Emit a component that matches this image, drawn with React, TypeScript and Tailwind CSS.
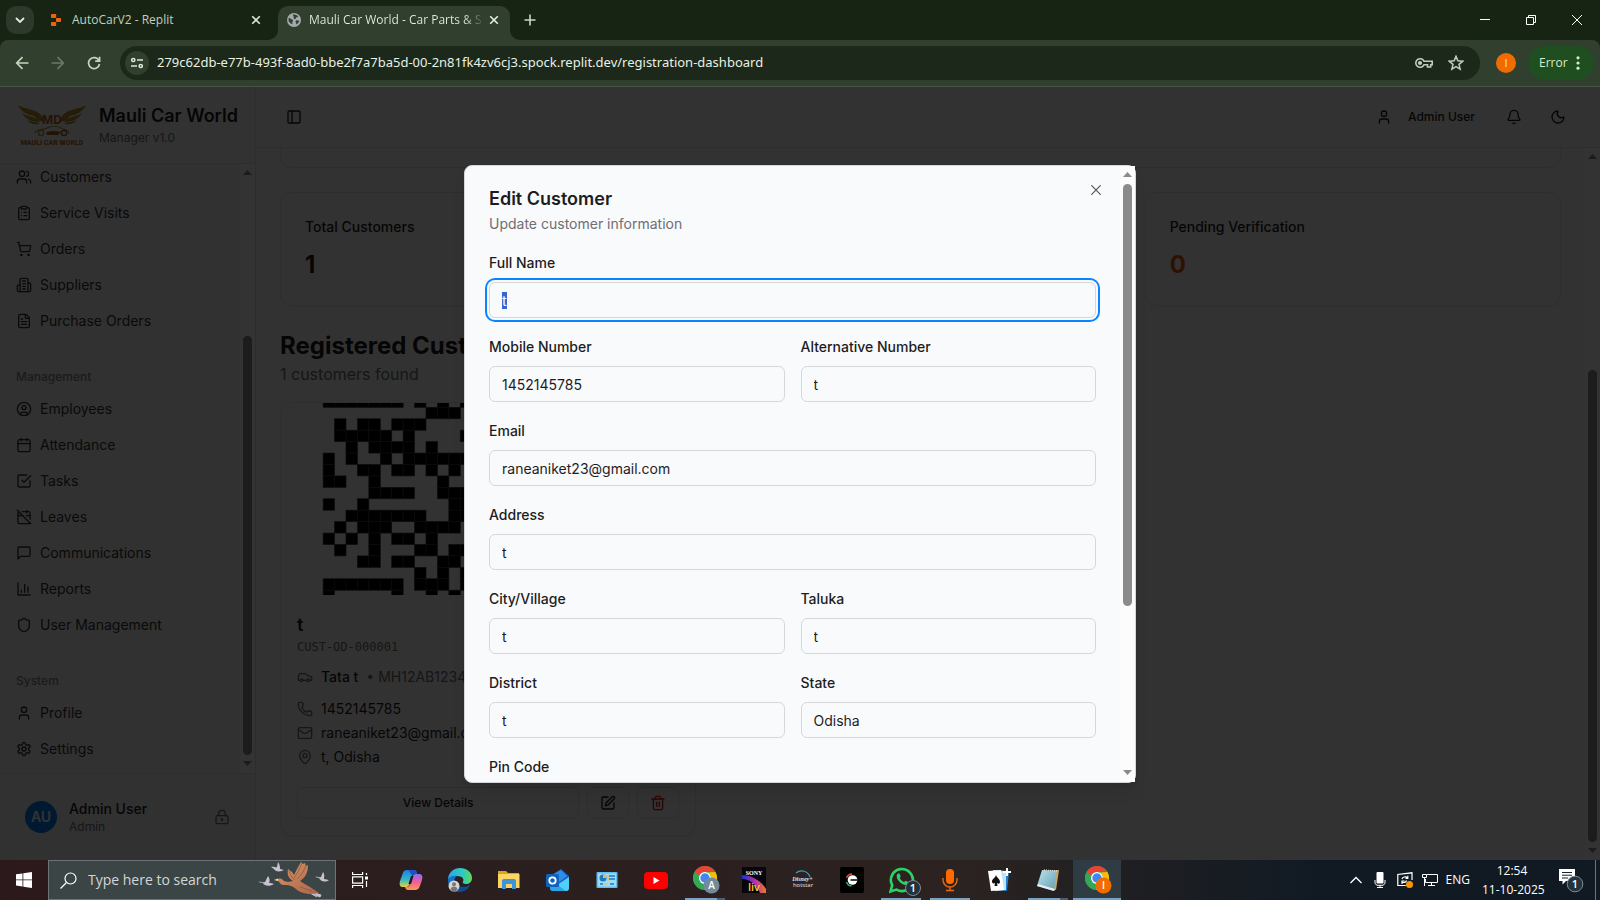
import { useEffect, useRef, type ReactNode } from 'react';
import {
  Bell,
  Calendar,
  CalendarOff,
  Car,
  CircleUser,
  ClipboardList,
  FileText,
  LockKeyhole,
  Mail,
  MapPin,
  Moon,
  PanelLeft,
  Phone,
  Shield,
  ShoppingCart,
  Trash2,
  User,
  Users,
} from 'lucide-react';

/* ---------- icons ---------- */

function Stroke({ children }: { children: ReactNode }) {
  return (
    <svg
      viewBox="0 0 24 24"
      fill="none"
      stroke="currentColor"
      strokeWidth="2"
      strokeLinecap="round"
      strokeLinejoin="round"
      className="size-4 shrink-0"
    >
      {children}
    </svg>
  );
}

const BuildingIcon = () => (
  <Stroke>
    <path d="M6 22V4a2 2 0 0 1 2-2h8a2 2 0 0 1 2 2v18Z" />
    <path d="M6 12H4a2 2 0 0 0-2 2v6a2 2 0 0 0 2 2h2" />
    <path d="M18 9h2a2 2 0 0 1 2 2v9a2 2 0 0 1-2 2h-2" />
    <path d="M10 6h4M10 10h4M10 14h4M10 18h4" />
  </Stroke>
);

const TaskIcon = () => (
  <Stroke>
    <path d="m9 11 3 3L22 4" />
    <path d="M21 12v7a2 2 0 0 1-2 2H5a2 2 0 0 1-2-2V5a2 2 0 0 1 2-2h11" />
  </Stroke>
);

const MessageIcon = () => (
  <Stroke>
    <path d="M21 15a2 2 0 0 1-2 2H7l-4 4V5a2 2 0 0 1 2-2h14a2 2 0 0 1 2 2z" />
  </Stroke>
);

const ReportIcon = () => (
  <Stroke>
    <path d="M3 3v18h18M18 17V9M13 17V5M8 17v-3" />
  </Stroke>
);

const GearIcon = () => (
  <Stroke>
    <path d="M12.22 2h-.44a2 2 0 0 0-2 2v.18a2 2 0 0 1-1 1.73l-.43.25a2 2 0 0 1-2 0l-.15-.08a2 2 0 0 0-2.73.73l-.22.38a2 2 0 0 0 .73 2.73l.15.1a2 2 0 0 1 1 1.72v.51a2 2 0 0 1-1 1.74l-.15.09a2 2 0 0 0-.73 2.73l.22.38a2 2 0 0 0 2.73.73l.15-.08a2 2 0 0 1 2 0l.43.25a2 2 0 0 1 1 1.73V20a2 2 0 0 0 2 2h.44a2 2 0 0 0 2-2v-.18a2 2 0 0 1 1-1.73l.43-.25a2 2 0 0 1 2 0l.15.08a2 2 0 0 0 2.73-.73l.22-.39a2 2 0 0 0-.73-2.73l-.15-.08a2 2 0 0 1-1-1.74v-.5a2 2 0 0 1 1-1.74l.15-.09a2 2 0 0 0 .73-2.73l-.22-.38a2 2 0 0 0-2.73-.73l-.15.08a2 2 0 0 1-2 0l-.43-.25a2 2 0 0 1-1-1.73V4a2 2 0 0 0-2-2z" />
    <circle cx="12" cy="12" r="3" />
  </Stroke>
);

const EditIcon = () => (
  <Stroke>
    <path d="M12 3H5a2 2 0 0 0-2 2v14a2 2 0 0 0 2 2h14a2 2 0 0 0 2-2v-7" />
    <path d="M18.375 2.625a2.121 2.121 0 1 1 3 3L12 15l-4 1 1-4Z" />
  </Stroke>
);

/* ---------- scroll bar ---------- */

function ScrollBar({ before, thumb, after }: { before: number; thumb: number; after: number }) {
  return (
    <div className="flex w-[15px] shrink-0 flex-col items-center bg-[#fcfcfc]" aria-hidden="true">
      <svg viewBox="0 0 9 15" className="h-[15px] w-[9px] shrink-0" fill="#8b8b8b">
        <path d="M4.500 6 9 11H0Z" />
      </svg>
      <div className="flex w-[9px] flex-1 flex-col">
        <div className="basis-0" style={{ flexGrow: before }} />
        <div className="basis-0 rounded-full bg-[#8b8b8b]" style={{ flexGrow: thumb }} />
        <div className="basis-0" style={{ flexGrow: after }} />
      </div>
      <svg viewBox="0 0 9 15" className="h-[15px] w-[9px] shrink-0" fill="#8b8b8b">
        <path d="M0 3h9L4.500 8Z" />
      </svg>
    </div>
  );
}

/* ---------- browser frame ---------- */

const CloseX = () => (
  <svg viewBox="0 0 10 10" className="size-[10px]" stroke="currentColor" strokeWidth="1.6" fill="none">
    <path d="M1.200 1.200 8.800 8.800M8.800 1.200 1.200 8.800" />
  </svg>
);

function TabStrip() {
  return (
    <div className="flex h-10 items-center bg-[#172413] pl-[6px] font-['Open_Sans','Noto_Sans',sans-serif] text-xs text-[#c3d0be]">
      <button aria-label="Search tabs" className="flex size-7 items-center justify-center rounded-[10px] bg-[#2d3a2b] text-[#e2ecde]">
        <svg viewBox="0 0 10 6" className="h-[6px] w-[10px]" fill="none" stroke="currentColor" strokeWidth="1.800">
          <path d="m1 1 4 4 4-4" />
        </svg>
      </button>
      <div className="flex w-[244px] items-center pr-[17px] pl-[17px]">
        <svg viewBox="0 0 10 12" className="mr-[11px] h-3 w-[10px]" fill="#f26207">
          <rect width="5.200" height="4" rx=".8" />
          <rect x="5" y="4" width="5" height="4" rx=".8" />
          <rect y="8" width="5.200" height="4" rx=".8" />
        </svg>
        <span className="flex-1 whitespace-nowrap">AutoCarV2 - Replit</span>
        <button aria-label="Close tab" className="text-[#dbe5d7]"><CloseX /></button>
      </div>
      <div className="relative flex h-[34px] w-[232px] items-center self-end rounded-t-[10px] bg-[#303f2e] pr-[11px] pb-[6px] pl-[9px] text-[#e6efe2]">
        <svg viewBox="0 0 10 10" className="absolute bottom-0 -left-[10px] size-[10px]" fill="#303f2e"><path d="M10 0v10H0A10 10 0 0 0 10 0Z" /></svg>
        <svg viewBox="0 0 10 10" className="absolute -right-[10px] bottom-0 size-[10px]" fill="#303f2e"><path d="M0 0v10h10A10 10 0 0 1 0 0Z" /></svg>
        <svg viewBox="0 0 14 14" className="mr-2 size-[14px] shrink-0">
          <circle cx="7" cy="7" r="7" fill="#a3aaa9" />
          <path d="M2 4.500c1 1.500 2.500 1.300 3.600 2.200.9.700.3 1.700-.2 2.100-.5.500 0 1.500.3 2.500C3.500 11 1.600 9 1.500 7c0-1 .1-1.800.5-2.500ZM6 1.600c2-.4 4 .4 5.200 1.900-.3 1-1.400.6-2 1-.8.500 0 1.300-.9 1.600C7 6.500 6.500 5 6.700 4.200 6.800 3.500 5.500 3 6 1.600ZM9 7.400c1.300-.6 2.600.1 3.200.6-.4 1.500-1.300 2.800-2.700 3.500C9.300 10.300 7.800 8.400 9 7.400Z" fill="#35423a" />
        </svg>
        <span className="flex-1 bg-linear-to-r from-[#e6efe2] from-88% to-[#303f2e] bg-clip-text whitespace-nowrap text-transparent">
          Mauli Car World - Car Parts &amp; S
        </span>
        <button aria-label="Close tab" className="ml-1"><CloseX /></button>
      </div>
      <button aria-label="New tab" className="ml-[14px] text-[#c9d7c4]">
        <svg viewBox="0 0 12 12" className="size-3" stroke="currentColor" strokeWidth="1.600"><path d="M6 .5v11M.5 6h11" /></svg>
      </button>
      <div className="ml-auto flex text-white">
        <button aria-label="Minimize" className="flex h-10 w-[46px] items-center justify-center">
          <svg viewBox="0 0 10 10" className="size-[10px]" fill="currentColor"><rect y="4" width="10" height="1" /></svg>
        </button>
        <button aria-label="Restore" className="flex h-10 w-[46px] items-center justify-center">
          <svg viewBox="0 0 10 10" className="size-[10px]" fill="none" stroke="currentColor"><path d="M.5 2.500h7v7h-7zM2.500 2.500v-2h7v7h-2" /></svg>
        </button>
        <button aria-label="Close" className="flex h-10 w-[46px] items-center justify-center">
          <svg viewBox="0 0 10 10" className="size-[10px]" fill="none" stroke="currentColor"><path d="m0 0 10 10M10 0 0 10" /></svg>
        </button>
      </div>
    </div>
  );
}

function Toolbar() {
  return (
    <div className="bg-[#172413]">
      <div className="flex h-[47px] items-center rounded-t-[8px] border-b border-[#455542] bg-[#303f2e] pr-[6px] pl-[15px] font-['Open_Sans','Noto_Sans',sans-serif] text-[#c3d7bd]">
        <button aria-label="Back" className="mr-[22px]">
          <svg viewBox="0 0 14 14" className="size-[14px]" fill="none" stroke="currentColor" strokeWidth="1.700"><path d="M13.500 7H2M7.500 1.200 1.700 7l5.800 5.800" /></svg>
        </button>
        <button aria-label="Forward" className="mr-[22px] text-[#6b7a67]">
          <svg viewBox="0 0 14 14" className="size-[14px]" fill="none" stroke="currentColor" strokeWidth="1.700"><path d="M.5 7H12M6.500 1.200 12.300 7l-5.800 5.800" /></svg>
        </button>
        <button aria-label="Reload" className="mr-[19px]">
          <svg viewBox="0 0 14 14" className="size-[14px]" fill="none" stroke="currentColor" strokeWidth="1.700"><path d="M12 4.600A5.500 5.500 0 1 0 12.500 8M12.600.8v4.400H8.200" /></svg>
        </button>
        <div className="flex h-[34px] flex-1 items-center rounded-full bg-[#1b281a] pr-4 pl-[5px]">
          <button aria-label="Site information" className="flex size-6 items-center justify-center rounded-full bg-[#303f2e] text-[#dde9d8]">
            <svg viewBox="0 0 12 12" className="size-3" fill="none" stroke="currentColor" strokeWidth="1.500">
              <circle cx="2.300" cy="3" r="1.600" /><path d="M6 3h6M0 9h6" /><circle cx="9.700" cy="9" r="1.600" />
            </svg>
          </button>
          <input
            aria-label="Address"
            readOnly
            value="279c62db-e77b-493f-8ad0-bbe2f7a7ba5d-00-2n81fk4zv6cj3.spock.replit.dev/registration-dashboard"
            className="ml-2 min-w-0 flex-1 bg-transparent font-['Noto_Sans',sans-serif] text-[13px] text-[#e8f1e4] outline-none"
          />
          <svg viewBox="0 0 18 12" className="mr-[15px] h-3 w-[18px] text-[#c3cbc0]" fill="none" stroke="currentColor" strokeWidth="1.600">
            <path d="M9 4.200A4.300 4.300 0 1 0 9 7.800h3.500V10h3.200V7.800h1.500V4.200Z" /><circle cx="5" cy="6" r="1.300" fill="currentColor" />
          </svg>
          <svg viewBox="0 0 24 24" className="size-4 text-[#c3cbc0]" fill="none" stroke="currentColor" strokeWidth="2.300">
            <path d="m12 2 2.800 6.800 7.200.6-5.500 4.700 1.700 7.100L12 17.400l-6.200 3.800 1.700-7.100L2 9.400l7.200-.6Z" />
          </svg>
        </div>
        <span className="mx-4 flex size-5 items-center justify-center rounded-full bg-[#f06c00] text-[11px] text-[#ffe1c6]">I</span>
        <button className="-ml-1 flex h-[34px] w-[66px] items-center rounded-full bg-[#1f4e20] pl-[11px] text-xs text-[#d5edcc]">
          <span className="flex-1 text-left">Error</span>
          <svg viewBox="0 0 4 14" className="mr-[14px] h-[14px] w-1" fill="currentColor"><circle cx="2" cy="1.800" r="1.600" /><circle cx="2" cy="7" r="1.600" /><circle cx="2" cy="12.200" r="1.600" /></svg>
        </button>
      </div>
    </div>
  );
}

/* ---------- application ---------- */

function Logo() {
  return (
    <svg viewBox="0 0 70 44" className="h-11 w-[70px] shrink-0">
      <g fill="#b8922a">
        <path d="M1 2c7 5 20 3 25 13l2 4c-8-1-9-4-11-6C11 12 4 9 1 2Z" />
        <path d="M5 10c5 4 14 3 18 9-7 0-14-2-18-9Z" />
        <path d="M10 17c4 2 9 1 13 4-5 1-10 0-13-4Z" />
        <path d="M69 2c-7 5-20 3-25 13l-2 4c8-1 9-4 11-6 6-1 13-4 16-11Z" />
        <path d="M65 10c-5 4-14 3-18 9 7 0 14-2 18-9Z" />
        <path d="M60 17c-4 2-9 1-13 4 5 1 10 0 13-4Z" />
      </g>
      <path d="M18 30c2-4 8-3 12-5 5-3 12-2 16 1 3 1 6 1 6 5M29 31h13" fill="none" stroke="#b8922a" strokeWidth="1.100" />
      <circle cx="24" cy="30" r="2.600" fill="none" stroke="#b8922a" strokeWidth="1.200" />
      <circle cx="47" cy="30" r="2.600" fill="none" stroke="#a3541c" strokeWidth="1.200" />
      <path d="M29 30c4-3 10-2 15-1l-3 3H31Z" fill="#b0601c" />
      <text x="35" y="21" textAnchor="middle" fontFamily="Inter, sans-serif" fontWeight="700" fontSize="12" fill="#b8661c">MD</text>
      <text x="35" y="42" textAnchor="middle" fontFamily="Roboto, sans-serif" fontWeight="900" fontSize="7" fill="#c0701c">MAULI CAR WORLD</text>
    </svg>
  );
}

type Item = { label: string; icon: ReactNode };

function NavGroup({ title, items }: { title?: string; items: Item[] }) {
  return (
    <div className="p-2">
      {title && <div className="flex h-8 items-center px-2 text-xs font-medium text-[#86868b]">{title}</div>}
      <ul className="flex flex-col gap-1">
        {items.map((item) => (
          <li key={item.label}>
            <a href="#" className="flex h-8 items-center gap-2 px-2 text-sm text-[#333336]">
              {item.icon}
              {item.label}
            </a>
          </li>
        ))}
      </ul>
    </div>
  );
}

const ic = 'size-4 shrink-0';

const business: Item[] = [
  { label: 'Customers', icon: <Users className={ic} /> },
  { label: 'Service Visits', icon: <ClipboardList className={ic} /> },
  { label: 'Orders', icon: <ShoppingCart className={ic} /> },
  { label: 'Suppliers', icon: <BuildingIcon /> },
  { label: 'Purchase Orders', icon: <FileText className={ic} /> },
];
const management: Item[] = [
  { label: 'Employees', icon: <CircleUser className={ic} /> },
  { label: 'Attendance', icon: <Calendar className={ic} /> },
  { label: 'Tasks', icon: <TaskIcon /> },
  { label: 'Leaves', icon: <CalendarOff className={ic} /> },
  { label: 'Communications', icon: <MessageIcon /> },
  { label: 'Reports', icon: <ReportIcon /> },
  { label: 'User Management', icon: <Shield className={ic} /> },
];
const system: Item[] = [
  { label: 'Profile', icon: <User className={ic} /> },
  { label: 'Settings', icon: <GearIcon /> },
];

function Sidebar() {
  return (
    <aside className="flex w-64 shrink-0 flex-col border-r border-[#e0e0e0] bg-[#f5f5f5]">
      <div className="flex h-[77px] shrink-0 items-center gap-3 border-b border-[#e4e4e4] bg-[#fafafa] pr-3 pl-[17px]">
        <Logo />
        <div className="whitespace-nowrap">
          <h2 className="text-lg leading-[26px] font-semibold">Mauli Car World</h2>
          <p className="text-xs leading-[18px] text-[#6e6e73]">Manager v1.0</p>
        </div>
      </div>
      <div className="flex min-h-0 flex-1">
        <nav className="flex min-w-0 flex-1 flex-col justify-end gap-2 overflow-hidden">
          <NavGroup items={business} />
          <NavGroup title="Management" items={management} />
          <NavGroup title="System" items={system} />
        </nav>
        <ScrollBar before={157} thumb={419} after={3} />
      </div>
      <div className="flex h-[87px] shrink-0 items-center border-t border-[#e4e4e4] bg-[#f5f5f5] pr-[25px] pl-[25px]">
        <span className="flex size-8 items-center justify-center rounded-full bg-[#0078f0] text-sm font-semibold text-white">AU</span>
        <div className="ml-3 flex-1">
          <div className="text-sm leading-5 font-medium">Admin User</div>
          <div className="text-xs leading-4 text-[#6e6e73]">Admin</div>
        </div>
        <button aria-label="Lock" className="text-[#6e6e73]"><LockKeyhole className="size-4" /></button>
      </div>
    </aside>
  );
}

/* Columns filled in each row of the code; the first and last rows are cut by the frame. */
const qrRows = [
  [0, 1, 2, 3, 4, 5, 6, 8, 10, 12],
  [9, 10, 11],
  [1, 3, 4, 6, 7, 8],
  [1, 2, 3, 4, 5, 7, 12],
  [2, 4, 5, 6, 7, 9],
  [0, 2, 5, 7, 8, 9, 10, 11, 12],
  [0, 3, 4, 6, 7, 9, 11],
  [0, 1, 4, 10],
  [4, 5, 6, 7, 10, 11, 12],
  [0, 3, 11, 12],
  [2, 3, 4, 5, 6, 7, 8, 11, 12],
  [1, 3, 4, 5, 8, 9, 10, 11],
  [0, 2, 4, 6, 7, 9],
  [1, 4, 8, 9, 11, 12],
  [3, 4, 6, 7, 10, 11],
  [8, 10, 12],
  [0, 1, 2, 3, 4, 5, 6, 8, 9, 10, 12],
  [0, 6, 9, 11],
];

function QrCode() {
  return (
    <svg viewBox="-0.06 0.62 29 16.8" className="h-48 w-full" stroke="#3a3a3a" strokeWidth="0.06">
      {qrRows.map((cols, row) =>
        cols.map((col) => <rect key={`${row}-${col}`} x={col} y={row} width="1" height="1" />),
      )}
    </svg>
  );
}

const card = 'rounded-xl border border-[#e6e6e6] bg-[#fafafa] shadow-xs';

function StatCard({ title, value, tone }: { title: string; value: string; tone: string }) {
  return (
    <div className={`${card} flex flex-col gap-3 p-6`}>
      <h3 className="text-sm font-medium">{title}</h3>
      <div className={`text-2xl leading-8 font-bold ${tone}`}>{value}</div>
    </div>
  );
}

function CustomerCard() {
  const small = 'flex h-8 items-center justify-center rounded-md border border-[#dedede] text-xs font-medium';
  return (
    <article className={`${card} overflow-hidden`}>
      <QrCode />
      <div className="p-4 text-sm">
        <h3 className="text-lg leading-7 font-semibold">t</h3>
        <p className="font-['DejaVu_Sans_Mono',monospace] text-xs text-[#6e6e73]">CUST-OD-000001</p>
        <div className="mt-3 flex items-center gap-2">
          <Car className="size-4 text-[#6e6e73]" />
          <span className="font-medium">Tata t</span>
          <span className="text-[#6e6e73]">• MH12AB1234</span>
        </div>
        <div className="mt-3 flex flex-col gap-1 text-[#1d1d1f]">
          <div className="flex items-center gap-2"><Phone className="size-4 text-[#6e6e73]" />1452145785</div>
          <div className="flex items-center gap-2"><Mail className="size-4 text-[#6e6e73]" />raneaniket23@gmail.com</div>
          <div className="flex items-center gap-2"><MapPin className="size-4 text-[#6e6e73]" />t, Odisha</div>
        </div>
        <div className="mt-5 flex gap-2">
          <button className={`${small} flex-1`}>View Details</button>
          <button aria-label="Edit" className={`${small} w-[42px]`}><EditIcon /></button>
          <button aria-label="Delete" className={`${small} w-[42px] text-[#e11d1d]`}><Trash2 className="size-4" /></button>
        </div>
      </div>
    </article>
  );
}

function Main() {
  return (
    <div className="flex min-w-0 flex-1 flex-col">
      <header className="flex h-[61px] shrink-0 items-center border-b border-[#e4e4e4] px-6">
        <button aria-label="Toggle sidebar" className="flex size-7 items-center justify-center"><PanelLeft className="size-4" /></button>
        <div className="ml-auto flex items-center gap-2">
          <button className="flex h-9 items-center gap-4 px-[13px] text-xs font-medium"><User className="size-4" />Admin User</button>
          <button aria-label="Notifications" className="flex size-9 items-center justify-center"><Bell className="size-4" /></button>
          <button aria-label="Dark mode" className="flex size-9 items-center justify-center"><Moon className="size-4" /></button>
        </div>
      </header>
      <div className="flex min-h-0 flex-1">
        <main className="flex min-w-0 flex-1 flex-col justify-end overflow-hidden p-6">
          <div className={`${card} mb-6 h-20 shrink-0`} />
          <div className="mb-6 grid shrink-0 grid-cols-3 gap-4">
            <StatCard title="Total Customers" value="1" tone="text-[#1d1d1f]" />
            <div className={card} />
            <StatCard title="Pending Verification" value="0" tone="text-[#ea580c]" />
          </div>
          <h2 className="text-2xl leading-8 font-bold">Registered Customers</h2>
          <p className="mb-4 text-base leading-6 text-[#6e6e73]">1 customers found</p>
          <div className="grid shrink-0 grid-cols-3 gap-4">
            <CustomerCard />
          </div>
        </main>
        <ScrollBar before={207} thumb={472} after={3} />
      </div>
    </div>
  );
}

/* ---------- dialog ---------- */

function Field({ id, label, value, selected }: { id: string; label: string; value: string; selected?: boolean }) {
  const ref = useRef<HTMLInputElement>(null);
  useEffect(() => {
    if (selected) {
      ref.current?.focus({ preventScroll: true });
      ref.current?.select();
    }
  }, [selected]);
  return (
    <div className="flex min-w-0 flex-col gap-[6px]">
      <label htmlFor={id} className="text-sm leading-[26px] font-medium">{label}</label>
      <input
        id={id}
        ref={ref}
        defaultValue={value}
        className="h-9 w-full rounded-md border border-[#d5d7db] bg-[#f9fafc] px-3 text-sm ring-offset-2 ring-offset-[#f9fafc] outline-none selection:bg-[#3367d1] selection:text-white focus:ring-2 focus:ring-[#0a84ff]"
      />
    </div>
  );
}

function EditDialog() {
  return (
    <div
      role="dialog"
      aria-labelledby="dialog-title"
      className="flex h-4/5 w-full max-w-2xl rounded-lg border border-[#d4d6d9] bg-[#f9fafc] text-[#1d1d1f] shadow-lg"
    >
      <div className="relative min-w-0 flex-1 overflow-hidden rounded-l-lg p-6">
        <button aria-label="Close" className="absolute top-4 right-4 text-[#55565a]">
          <svg viewBox="0 0 16 16" className="size-4" fill="none" stroke="currentColor" strokeWidth="1.200" strokeLinecap="round"><path d="m3.700 3.700 8.600 8.600M12.300 3.700l-8.600 8.600" /></svg>
        </button>
        <h2 id="dialog-title" className="text-lg leading-[18px] font-semibold">Edit Customer</h2>
        <p className="mt-[6px] text-sm text-[#6e6e73]">Update customer information</p>
        <form className="mt-4 flex flex-col gap-4">
          <Field id="name" label="Full Name" value="t" selected />
          <div className="grid grid-cols-2 gap-4">
            <Field id="mobile" label="Mobile Number" value="1452145785" />
            <Field id="alt" label="Alternative Number" value="t" />
          </div>
          <Field id="email" label="Email" value="raneaniket23@gmail.com" />
          <Field id="address" label="Address" value="t" />
          <div className="grid grid-cols-2 gap-4">
            <Field id="city" label="City/Village" value="t" />
            <Field id="taluka" label="Taluka" value="t" />
            <Field id="district" label="District" value="t" />
            <Field id="state" label="State" value="Odisha" />
          </div>
          <Field id="pin" label="Pin Code" value="" />
        </form>
      </div>
      <ScrollBar before={3} thumb={422} after={161} />
    </div>
  );
}

/* ---------- taskbar ---------- */

function Birds() {
  return (
    <svg viewBox="0 0 74 38" className="mr-[3px] h-[38px] w-[74px]">
      <defs>
        <linearGradient id="goose" x1="0" y1="0" x2="1" y2="1"><stop offset="0" stopColor="#d99560" /><stop offset="1" stopColor="#a8644c" /></linearGradient>
      </defs>
      <g fill="#c9c0d2">
        <path d="M13 6c3-1 4 1 6 0l1-5c2 3 2 5 2 7 2 0 2 1 4 1-3 2-9 2-10-1Z" />
        <path d="M0 21c3-1 5 1 7 0l3-6c2 3 2 5 1 7 2 0 3 0 5 1-4 3-10 2-11-1Z" />
        <path d="M57 16c3-1 4 1 6 0l2-5c2 3 1 5 1 7 2 0 3 1 5 1-4 3-9 1-10-2Z" />
        <path d="m48 29 15 5-1 2-12-5 9 5" stroke="#c9c0d2" strokeWidth="1" />
      </g>
      <path d="M20 18c3-1 4 0 6 2l4 1 5-1c-5-3-6-7-5-12l4 3 2 3 3-6 4-7 2 2 2-1 1 3 2-1c0 8-3 13-8 16l3 2 7 4 9 6c-8 2-18 1-23-4-4-3-6-4-10-4-3 0-5 0-6-2-1-1-3-3-2-3Z" fill="url(#goose)" />
      <path d="M31 9c1 5 3 8 6 10M44 2c-3 7-5 11-8 15M48 4c-2 6-5 11-9 14M42 26l12 4" fill="none" stroke="#8a5546" strokeWidth=".7" />
      <path d="m20 17.500-4 1.500 4 1Z" fill="#e9dfd8" />
    </svg>
  );
}

function Chrome({ badge, tone }: { badge: string; tone: string }) {
  return (
    <svg viewBox="0 0 28 28" className="-mr-1 size-7">
      <circle cx="12" cy="12" r="12" fill="#34a853" />
      <path d="M1.600 6A12 12 0 0 1 22.400 6H12a6 6 0 0 0-5.500 3.500Z" fill="#ea4335" />
      <path d="M1.600 6 6.800 15 12 18l-2 5.800A12 12 0 0 1 1.600 6Z" fill="#34a853" />
      <path d="M22.400 6A12 12 0 0 1 11 24l6.200-9A6 6 0 0 0 15 6.500Z" fill="#fbbc04" />
      <circle cx="12" cy="12" r="6" fill="#fff" />
      <circle cx="12" cy="12" r="4.700" fill="#4285f4" />
      <circle cx="18.500" cy="19.500" r="8" fill={tone} />
      <text x="18.500" y="23" textAnchor="middle" fontFamily="Open Sans, sans-serif" fontWeight="600" fontSize="10" fill="#fff">{badge}</text>
    </svg>
  );
}

const g = 'size-6';

const apps: { name: string; icon: ReactNode; bar?: 'full' | 'split' | 'active' }[] = [
  {
    name: 'Copilot',
    icon: (
      <svg viewBox="0 0 24 24" className={g}>
        <defs>
          <linearGradient id="cpa" x1="0" y1="0" x2="0" y2="1"><stop offset="0" stopColor="#1b7fe8" /><stop offset=".55" stopColor="#2fb6c9" /><stop offset="1" stopColor="#e8d33a" /></linearGradient>
          <linearGradient id="cpb" x1="0" y1="0" x2="0" y2="1"><stop offset="0" stopColor="#8f6af5" /><stop offset=".5" stopColor="#ee5f9a" /><stop offset="1" stopColor="#ff9a4d" /></linearGradient>
        </defs>
        <path d="M8 2h7c2 0 2.500 1.500 3 4h-2c-2 0-3 1-3.500 3L10.500 16c-.5 2-1.500 3-3.500 3H4c-3 0-4-2-3-6L3.500 6C4.300 3.500 5.500 2 8 2Z" fill="url(#cpa)" />
        <path d="M16 22H9c-2 0-2.500-1.500-3-3h1.500c2 0 3-1 3.500-3l2.500-7c.5-2 1.500-3 3.500-3h3c3 0 4 2 3 6l-2.500 7c-.8 2-2 3-4.500 3Z" fill="url(#cpb)" />
        <path d="m12 8-2.500 8h2.500l2.500-8Z" fill="#1e181c" />
        <path d="M9.500 2H15c2 0 2.500 1.500 3 4h-2c-1.500 0-2.300.6-3 1.500Z" fill="#1c52c4" />
      </svg>
    ),
  },
  {
    name: 'Edge',
    icon: (
      <svg viewBox="0 0 24 24" className={g}>
        <defs>
          <linearGradient id="eda" x1="0" y1="0" x2="1" y2="0"><stop offset="0" stopColor="#2aa7e6" /><stop offset=".6" stopColor="#2fc9c4" /><stop offset="1" stopColor="#5fdb55" /></linearGradient>
        </defs>
        <path d="M0 12C0 5 5 0 12 0s12 4.500 12 10c0 4-3 6-6 6-2.500 0-4-1-3-2.500C16.500 11 14 8 9 8c-4 0-8 1.500-9 4Z" fill="url(#eda)" />
        <path d="M0 12c1-3 4.500-5 9-4-2 1-3.500 4-2.500 7.500C7.700 20 12 22 17 21c-6 6-17 2-17-9Z" fill="#1372c9" />
        <path d="M9 13c-1 5 5 8 13 4-2 5-7 7-11 7C6 21 6 15 9 13Z" fill="#0c4c94" />
        <circle cx="6" cy="18" r="5.500" fill="#d5d5d5" /><circle cx="6" cy="16.300" r="2" fill="#777" /><path d="M2.500 21.500c.5-4 6.500-4 7 0-2 2.500-5 2.500-7 0Z" fill="#777" />
      </svg>
    ),
  },
  {
    name: 'File Explorer',
    icon: (
      <svg viewBox="0 0 24 24" className={g}>
        <path d="M1 3h8l2 2h11v5H1Z" fill="#e0a21c" /><path d="M1 6h21.500v14H1Z" fill="#fcd462" />
        <path d="M5 21v-8a2 2 0 0 1 2-2h10a2 2 0 0 1 2 2v8h-4v-5H9v5Z" fill="#3f94d8" />
      </svg>
    ),
  },
  {
    name: 'Outlook',
    icon: (
      <svg viewBox="0 0 24 24" className={g}>
        <path d="m4 8 11-7 8 7v12a3 3 0 0 1-3 3H7a3 3 0 0 1-3-3Z" fill="#1a5fc0" />
        <path d="m6 7 9-5 6 6-9 7Z" fill="#2f8de8" /><path d="m23 9-12 8 8 6h1a3 3 0 0 0 3-3Z" fill="#4fd0f5" /><path d="m4 12 16 11H7a3 3 0 0 1-3-3Z" fill="#2fa4e6" />
        <rect x="0" y="6" width="13" height="13" rx="1.500" fill="#0f62bd" /><circle cx="6.500" cy="12.500" r="3.200" fill="none" stroke="#fff" strokeWidth="1.800" />
      </svg>
    ),
  },
  {
    name: 'System Settings',
    icon: (
      <svg viewBox="0 0 24 24" className={g}>
        <rect x="1.500" y="4" width="21" height="16" rx="1" fill="#62bdf0" /><rect x="3" y="5.500" width="18" height="13" fill="#9bdcf9" />
        <circle cx="8" cy="10" r="3.500" fill="#1c78c4" /><path d="M8 10V6.500A3.500 3.500 0 0 1 11.500 10Z" fill="#f6b73c" />
        <path d="M14 8h6M14 11h6M5 16h3M15 16h4" stroke="#1c78c4" strokeWidth="1.300" /><path d="M13 7v6M9 16h4" stroke="#f6b73c" strokeWidth="1.200" />
      </svg>
    ),
  },
  {
    name: 'YouTube',
    icon: (
      <svg viewBox="0 0 24 24" className={g}>
        <rect y="4" width="24" height="17" rx="4" fill="#f00" /><path d="m9.500 9 6 3.500-6 3.500Z" fill="#fff" />
      </svg>
    ),
  },
  { name: 'Chrome, profile A', icon: <Chrome badge="A" tone="#738a99" />, bar: 'split' },
  {
    name: 'Sony LIV',
    icon: (
      <svg viewBox="0 0 24 26" className="h-[26px] w-6">
        <defs><linearGradient id="liv" x1="0" y1="0" x2="1" y2="0"><stop offset="0" stopColor="#1735c9" /><stop offset=".5" stopColor="#b02ab5" /><stop offset="1" stopColor="#f0792a" /></linearGradient></defs>
        <rect width="24" height="26" fill="#07060f" /><path d="M0 8c8 0 19 5 24 14v4h-6C15 18 8 12 0 12Z" fill="url(#liv)" />
        <text x="12" y="8" textAnchor="middle" fontFamily="Liberation Serif, serif" fontWeight="700" fontSize="6" fill="#fff">SONY</text>
        <text x="12" y="24" textAnchor="middle" fontFamily="Open Sans, sans-serif" fontWeight="600" fontSize="11" fill="#ffc62b">liv</text>
      </svg>
    ),
  },
  {
    name: 'Disney+ Hotstar',
    icon: (
      <svg viewBox="0 0 24 24" className={g}>
        <path d="M5 5c5-4 12-2 14 4" fill="none" stroke="#3fa2bd" strokeWidth="1.200" />
        <text x="11.500" y="12.500" textAnchor="middle" fontFamily="Liberation Serif, serif" fontStyle="italic" fontWeight="700" fontSize="6" fill="#e6e6e6">Disney+</text>
        <text x="12" y="19" textAnchor="middle" fontFamily="Open Sans, sans-serif" fontSize="6" fill="#e6e6e6">hotstar</text>
      </svg>
    ),
  },
  {
    name: 'Video',
    icon: (
      <svg viewBox="0 0 24 26" className="h-[26px] w-6">
        <rect width="24" height="26" rx="2" fill="#000" />
        <path d="M12 7a6 6 0 0 0-5.500 4" fill="none" stroke="#e8443a" strokeWidth="1.500" /><path d="M6.500 15a6 6 0 0 0 5 4" fill="none" stroke="#3bb273" strokeWidth="1.500" />
        <circle cx="12.500" cy="13" r="4.800" fill="#fff" /><path d="M10.500 13h7" stroke="#000" strokeWidth="1.500" />
      </svg>
    ),
  },
  {
    name: 'WhatsApp',
    bar: 'full',
    icon: (
      <svg viewBox="0 0 32 32" className="-mr-2 -mb-1 size-8">
        <path d="m1.500 25.500 1.700-6.300a11 11 0 1 1 4.300 4.400Z" fill="none" stroke="#2bd366" strokeWidth="2.600" />
        <path d="M8.500 8c.7-1 1.800-.8 2.200 0l.9 2.300c.2.700-.9 1.400-.9 1.800.9 1.800 2.300 3.100 4.300 3.900.5 0 1.200-1.500 1.800-1.300l2.400 1.200c.6.400.2 1.700-.5 2.300-2 1.700-5 .5-7.500-1.700C8.700 14 6.500 11 8.500 8Z" fill="#2bd366" />
        <circle cx="24" cy="22" r="7.500" fill="#22333c" stroke="#7b8a91" />
        <text x="24" y="26" textAnchor="middle" fontFamily="Open Sans, sans-serif" fontWeight="600" fontSize="11" fill="#fff">1</text>
      </svg>
    ),
  },
  {
    name: 'Voice Recorder',
    bar: 'full',
    icon: (
      <svg viewBox="0 0 24 24" className={g}>
        <rect x="8" y="1" width="8" height="15" rx="4" fill="#ff6a00" /><path d="M5 10v2a7 7 0 0 0 14 0v-2M12 19v3M8 22.500h8" fill="none" stroke="#e86a10" strokeWidth="1.400" />
      </svg>
    ),
  },
  {
    name: 'Solitaire',
    icon: (
      <svg viewBox="0 0 24 24" className={g}>
        <path d="m9 2 13 2-2 19-10-1Z" fill="#1f7fd0" /><path d="m6 2 13 1v19l-11 1Z" fill="#bfe2f7" /><path d="m1 3 13-1 3 20-13 1Z" fill="#fff" />
        <path d="M9 7c1 3 4 4 4 7 0 2-2 2-3 1l.5 3h-3l.5-3c-1.500 1-3.500 0-3-2C5.500 10.500 8.500 10 9 7Z" fill="#111" /><path d="M20 0v8M16 4h8" stroke="#fff" strokeWidth="2" />
      </svg>
    ),
  },
  {
    name: 'Notepad',
    bar: 'split',
    icon: (
      <svg viewBox="0 0 24 24" className={g}>
        <defs><linearGradient id="npd" x1="0" y1="0" x2="1" y2="1"><stop offset="0" stopColor="#bfe3ec" /><stop offset="1" stopColor="#5f9fb3" /></linearGradient></defs>
        <path d="m7 3 16-1-3 20-5-1Z" fill="#c4a672" /><path d="m6 2 14 1-2 20L1 18Z" fill="url(#npd)" /><path d="m1 18 17 5 1-2L2 16Z" fill="#e9eef0" />
        <path d="M8 2l13 1" stroke="#ddd" strokeWidth="1.300" strokeDasharray="1 1" />
      </svg>
    ),
  },
  { name: 'Chrome, profile I', icon: <Chrome badge="I" tone="#f06c00" />, bar: 'active' },
];

function Taskbar() {
  return (
    <footer className="flex h-10 shrink-0 items-stretch bg-linear-to-r from-[#2c191b] via-[#2b2321] via-60% to-[#111a23] to-82% font-['Open_Sans','Noto_Sans',sans-serif] text-xs text-white">
      <button aria-label="Start" className="flex w-12 shrink-0 items-center justify-center">
        <svg viewBox="0 0 16 16" className="size-4" fill="#fff"><path d="M0 2.300 6.500 1.400v6.100H0ZM7.300 1.300 16 0v7.500H7.300ZM0 8.300h6.500v6.200L0 13.600ZM7.300 8.300H16V16l-8.700-1.300Z" /></svg>
      </button>
      <label className="flex w-72 shrink-0 items-center border border-[#6e7475] bg-[#3c4546] pl-[11px]">
        <svg viewBox="0 0 17 17" className="size-[17px] shrink-0" fill="none" stroke="#fff" strokeWidth="1.200"><circle cx="10.500" cy="6.500" r="5.500" /><path d="M6.500 10.500.5 16.500" /></svg>
        <input aria-label="Search" placeholder="Type here to search" className="ml-[11px] w-0 min-w-0 flex-1 bg-transparent text-sm outline-none placeholder:text-[#d3d6d6]" />
        <Birds />
      </label>
      <button aria-label="Task View" className="flex w-12 shrink-0 items-center justify-center">
        <svg viewBox="0 0 16 16" className="size-4" fill="none" stroke="#fff" strokeWidth="1.200">
          <path d="M.6 0v2.500h10V0M.6 16v-2.500h10V16M.6 4.800h10v6.400H.6zM14.500 1v2M14.500 9v6" /><path d="M13 4.500h3v3h-3z" fill="#fff" stroke="none" />
        </svg>
      </button>
      <div className="ml-[3px] flex shrink-0 gap-px">
        {apps.map((app) => (
          <button
            key={app.name}
            aria-label={app.name}
            className={`relative flex w-12 items-center justify-center ${app.bar === 'active' ? 'bg-[#303c44]' : ''}`}
          >
            {app.icon}
            {app.bar === 'active' && <span className="absolute inset-x-0 bottom-0 h-[2px] bg-[#7ba2c3]" />}
            {app.bar === 'full' && <span className="absolute inset-x-1 bottom-0 h-[2px] bg-[#7ba2c3]" />}
            {app.bar === 'split' && <span className="absolute inset-x-1 bottom-0 h-[2px] border-r-8 border-[#4b5f71] bg-[#7ba2c3]" />}
          </button>
        ))}
      </div>
      <div className="ml-auto flex shrink-0 items-center">
        <svg viewBox="0 0 12 8" className="mr-3 h-2 w-3" fill="none" stroke="#fff" strokeWidth="1.300"><path d="m.5 7 5.500-5.500L11.500 7" /></svg>
        <svg viewBox="0 0 12 16" className="mr-[11px] h-4 w-3" fill="#fff"><rect x="2.500" width="7" height="11.500" rx="1" /><path d="M1 8v3.500l2 1.800h6l2-1.800V8" fill="none" stroke="#fff" /><path d="M5.500 13h1v2H9v1H3v-1h2.500Z" /></svg>
        <svg viewBox="0 0 17 16" className="mr-2 h-4 w-[17px]" fill="none" stroke="#fff" strokeWidth="1.200">
          <path d="M15 8V.8L.8 2.500v11h8" /><path d="M5 7c.5-2 4-3 5.500-1M10.800 3.800v2.500H8.500M9.500 8.500c-.5 2-3 2.500-4.500 1.500M5 12V9h2.500" /><circle cx="12.500" cy="12.500" r="3.500" fill="#ff9500" stroke="none" />
        </svg>
        <svg viewBox="0 0 16 14" className="mr-2 h-[14px] w-4" fill="none" stroke="#fff"><path d="M5 1.500h10.500v8H3.500V6M.5 1.500h4v3h-4zM2.500 4.500v8.500M9.500 9.500v3M6 12.500h7" /></svg>
        <span>ENG</span>
        <div className="ml-3 w-[60px] text-center leading-[19px] whitespace-nowrap">
          12:54
          <br />
          11-10-2025
        </div>
        <svg viewBox="0 0 26 26" className="ml-4 size-[26px]">
          <path d="M1 2h16v12H8l-3.500 3.500V14H1Z" fill="#fff" /><path d="M4 5.500h10M4 8.200h10M4 11h6" stroke="#17212a" />
          <circle cx="17" cy="17" r="7.800" fill="#22333c" stroke="#7b8a91" /><text x="17" y="21" textAnchor="middle" fontFamily="Open Sans, sans-serif" fontWeight="600" fontSize="11" fill="#fff">1</text>
        </svg>
        <span className="mr-1 ml-[11px] h-10 w-px bg-[#6c747a]" />
      </div>
    </footer>
  );
}

export default function App() {
  return (
    <div className="flex h-screen flex-col overflow-hidden">
      <TabStrip />
      <Toolbar />
      <div className="relative flex min-h-0 flex-1 bg-[#fafafa] font-['Inter',sans-serif] text-[#1d1d1f]">
        <Sidebar />
        <Main />
        <div className="absolute inset-0 flex items-center justify-center bg-black/80 pt-px">
          <EditDialog />
        </div>
      </div>
      <Taskbar />
    </div>
  );
}
